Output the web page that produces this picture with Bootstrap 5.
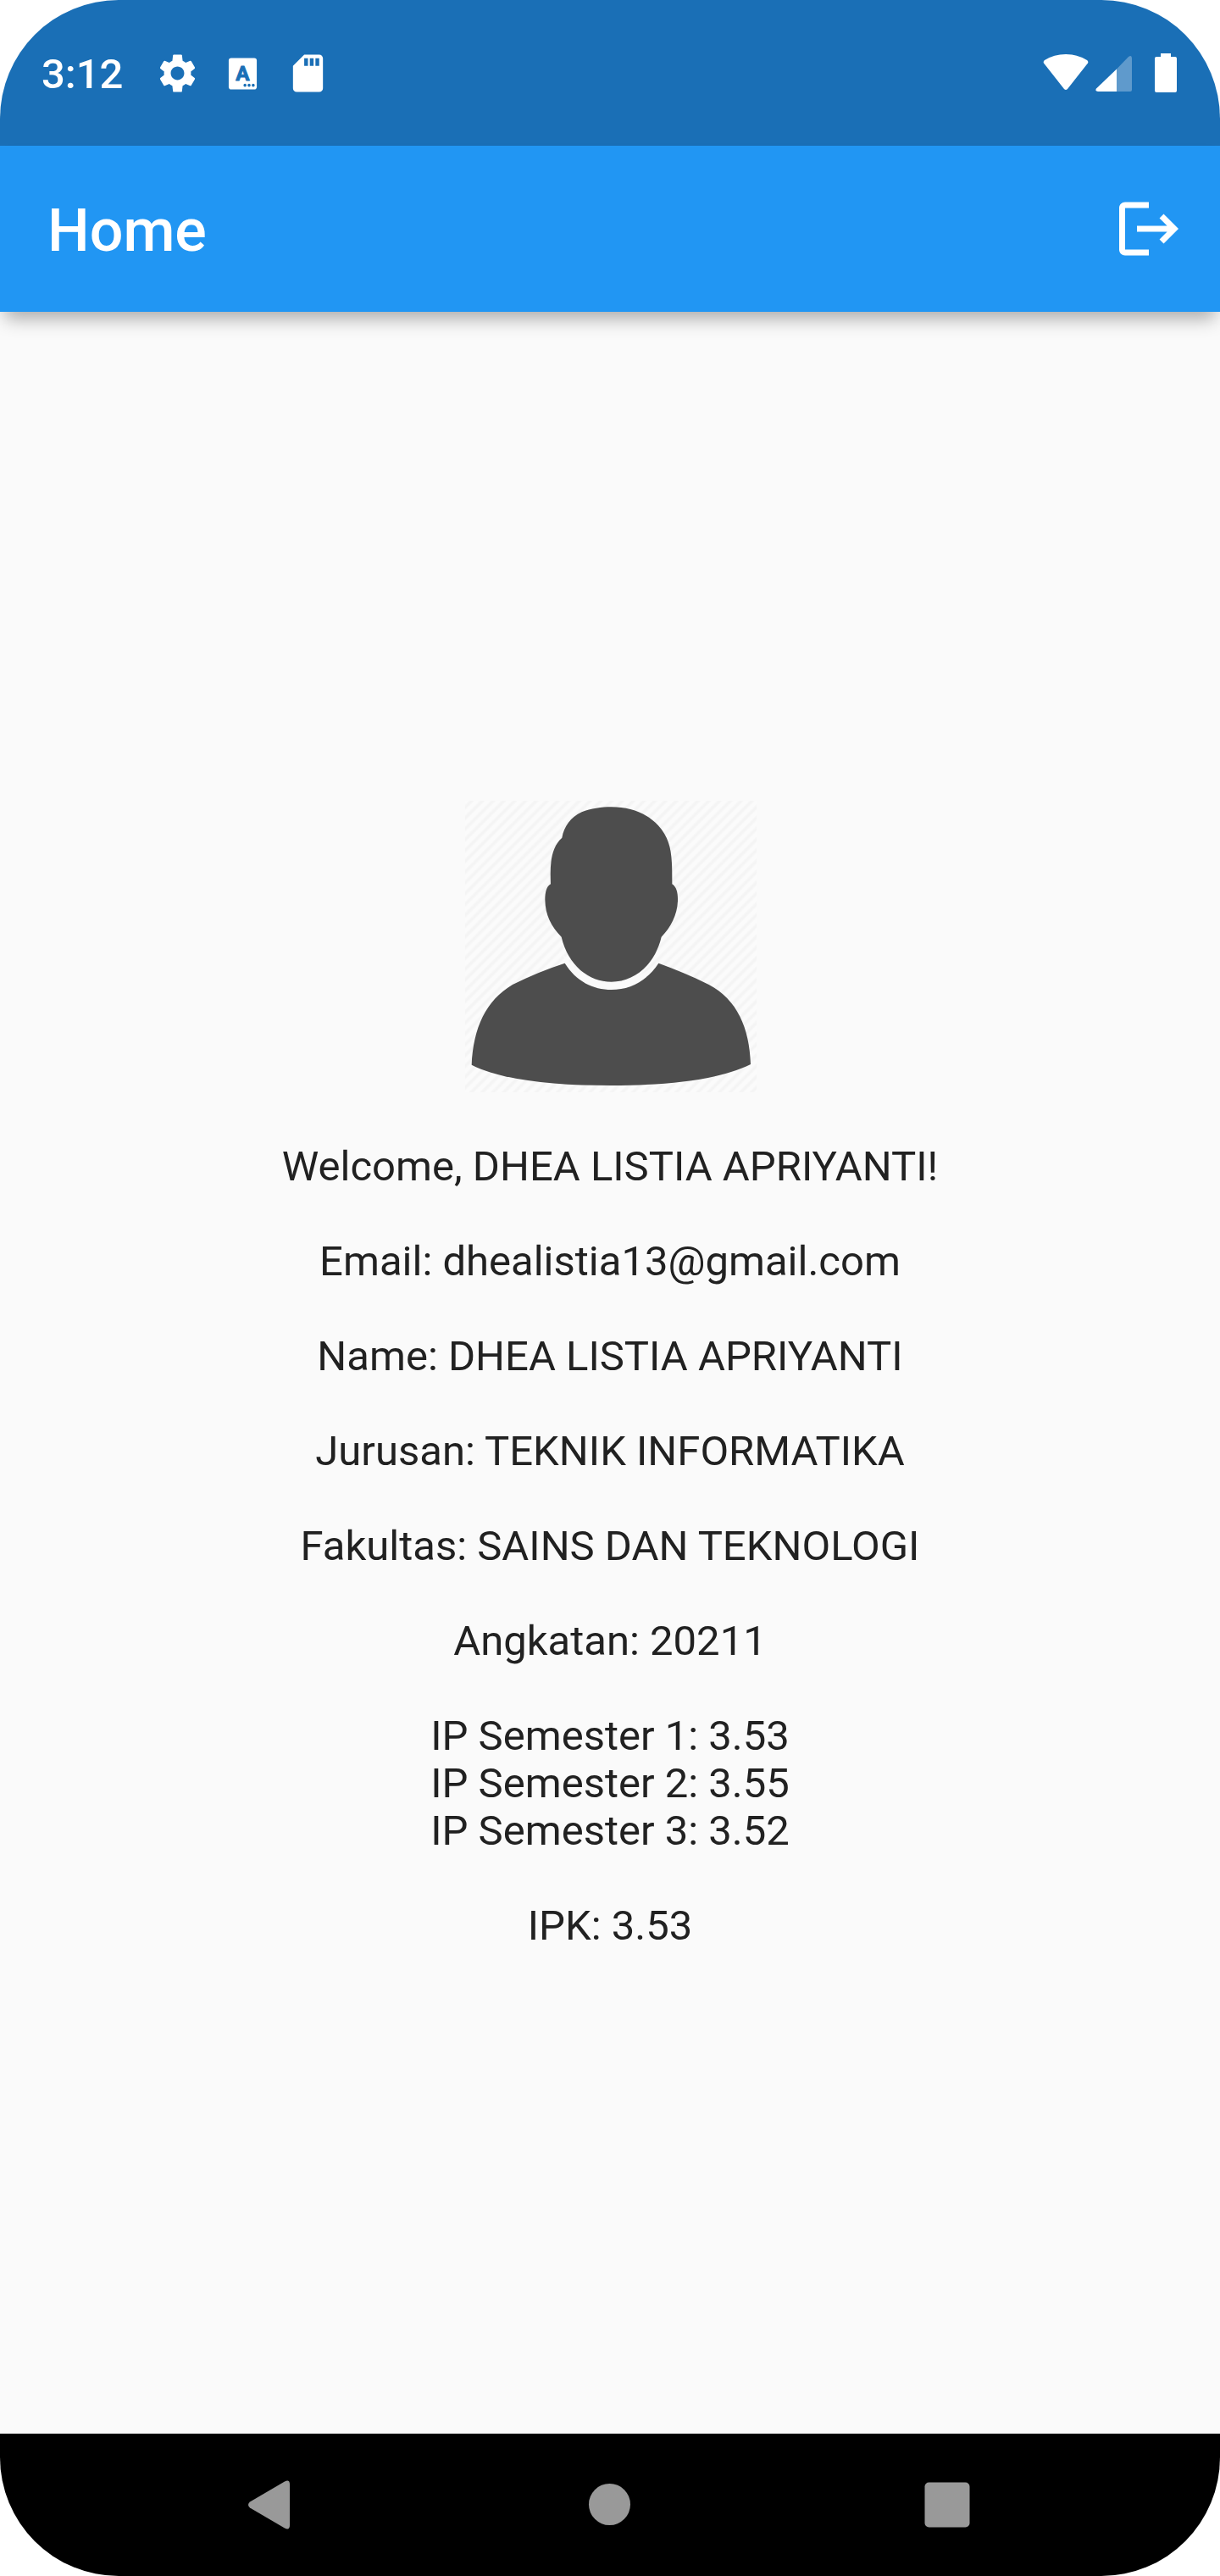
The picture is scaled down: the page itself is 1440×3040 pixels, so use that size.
<!DOCTYPE html>
<html lang="id">
<head>
<meta charset="utf-8">
<meta name="viewport" content="width=device-width, initial-scale=1">
<title>Home</title>
<link rel="stylesheet" href="https://cdn.jsdelivr.net/npm/bootstrap@5.3.0/dist/css/bootstrap.min.css">
<style>
  body { background: #fff; font-family: Roboto, "Liberation Sans", sans-serif; color: #212121; }
  .phone { background: #fafafa; border-radius: 140px; }
  .status-bar { background: #1a6fb6; height: 172px; padding: 0 49px; }
  .clock { font-size: 49px; line-height: 56px; font-weight: 500; margin-right: 14px; padding-top: 4px; }
  .status-bar svg { width: 53px; height: 53px; }
  .status-gap { gap: 24px; }
  .app-bar { background: #2196f3; height: 196px; padding: 0 0 0 56px; box-shadow: 0 14px 20px -6px rgba(0,0,0,.32); z-index: 1; }
  .app-title { font-size: 70px; line-height: 84px; font-weight: 500; padding-top: 4px; }
  .logout { width: 168px; height: 168px; --bs-btn-border-radius: 84px; }
  .logout svg { width: 84px; height: 84px; }
  .content-area { padding-top: 4px; }
  .avatar { width: 350px; height: 350px; margin-bottom: 56px; }
  .profile { font-size: 49px; line-height: 56px; }
  .profile p { margin-bottom: 56px; }
  .nav-keys { background: #000; height: 168px; padding: 0 120px; }
  .nav-keys svg { width: 70px; height: 70px; fill: #999; }
</style>
</head>
<body>
<div class="phone d-flex flex-column min-vh-100 overflow-hidden">
  <header class="status-bar d-flex align-items-center justify-content-between text-white">
    <div class="d-flex align-items-center status-gap">
      <span class="clock">3:12</span>
      <svg viewBox="0 0 24 24" fill="currentColor" aria-hidden="true"><path d="M19.14 12.94c.04-.3.06-.61.06-.94 0-.32-.02-.64-.07-.94l2.03-1.58c.18-.14.23-.41.12-.61l-1.92-3.32c-.12-.22-.37-.29-.59-.22l-2.39.96c-.5-.38-1.03-.7-1.62-.94L14.4 2.31c-.04-.24-.24-.31-.48-.31h-3.84c-.24 0-.43.07-.47.31l-.36 3.04c-.59.24-1.13.57-1.62.94l-2.39-.96c-.22-.08-.47 0-.59.22L2.74 8.87c-.12.21-.08.47.12.61l2.03 1.58c-.05.3-.09.63-.09.94s.02.64.07.94l-2.03 1.58c-.18.14-.23.41-.12.61l1.92 3.32c.12.22.37.29.59.22l2.39-.96c.5.38 1.03.7 1.62.94l.36 3.04c.05.24.24.31.48.31h3.84c.24 0 .44-.07.47-.31l.36-3.04c.59-.24 1.13-.56 1.62-.94l2.39.96c.22.08.47 0 .59-.22l1.92-3.32c.12-.22.07-.47-.12-.61l-2.01-1.58zM12 15.6c-1.98 0-3.6-1.62-3.6-3.6s1.62-3.6 3.6-3.6 3.6 1.62 3.6 3.6-1.62 3.6-3.6 3.6z"/></svg>
      <svg viewBox="0 0 24 24" aria-hidden="true"><rect x="4.500" y="3.800" width="15" height="16.800" rx="1.400" fill="#fff"/><text x="12" y="15.800" text-anchor="middle" font-family="Roboto, sans-serif" font-size="11" font-weight="700" fill="#1a6fb6" stroke="#1a6fb6" stroke-width=".4" stroke-linejoin="round">A</text><g fill="#1a6fb6"><circle cx="13.200" cy="18.400" r=".8"/><circle cx="15.400" cy="18.400" r=".8"/><circle cx="17.600" cy="18.400" r=".8"/></g></svg>
      <svg viewBox="0 0 24 24" fill="currentColor" aria-hidden="true"><path d="M18 2h-8L4 8v12c0 1.100.9 2 2 2h12c1.100 0 2-.9 2-2V4c0-1.100-.9-2-2-2zm-6 6h-2V4h2v4zm3 0h-2V4h2v4zm3 0h-2V4h2v4z"/></svg>
    </div>
    <svg class="w-auto" viewBox="0 0 160 53" fill="currentColor" role="img" aria-label="Wi-Fi, sinyal, baterai">
      <path d="M1 14.500Q0 12.500 2 11Q13 4 27 4T52 11Q54 12.500 53 14.500L29 45Q27 47 25 45Z"/>
      <path d="M87 21.500V48H65Q61 47.500 63 44.500Z"/>
      <path d="M87 21.500L101 7Q105 4.500 105 9V46Q105 48 103 48H87Z" opacity=".3"/>
      <path d="M139 3h12v4h5q2 0 2 2v38q0 2-2 2h-22q-2 0-2-2V9q0-2 2-2h5z"/>
    </svg>
  </header>
  <nav class="app-bar position-relative d-flex align-items-center justify-content-between text-white">
    <h1 class="app-title m-0">Home</h1>
    <button type="button" class="btn logout text-white p-0 border-0 d-flex align-items-center justify-content-center" aria-label="Logout">
      <svg viewBox="0 0 24 24" fill="currentColor" aria-hidden="true"><path d="M17 7l-1.410 1.410L18.170 11H8v2h10.170l-2.580 2.580L17 17l5-5zM4 5h8V3H4c-1.100 0-2 .9-2 2v14c0 1.100.9 2 2 2h8v-2H4V5z"/></svg>
    </button>
  </nav>
  <main class="content-area flex-grow-1 d-flex flex-column align-items-center justify-content-center text-center">
    <svg class="avatar" viewBox="45 39 1050 1050" role="img" aria-label="Foto profil">
      <defs><pattern id="hatch" width="27" height="27" patternUnits="userSpaceOnUse" patternTransform="rotate(45)"><rect width="15" height="27" fill="#f8f8f8"/><rect x="4" width="7" height="27" fill="#f4f4f4"/></pattern></defs>
      <rect x="57" y="45" width="1032" height="1032" fill="#fbfbfb"/>
      <rect x="57" y="45" width="1032" height="1032" fill="url(#hatch)"/>
      <path d="M412 620Q475 714 575 714T740 620L738 610Q690 680 575 690Q470 680 405 590Z" fill="#fafafa"/>
      <g fill="#4d4d4d">
        <path d="M575 67C640 67 700 88 741 133C790 188 790 240 790 340C806 350 811 372 810 400C808 450 785 494 752 527C728 628 655 686 575 686C495 686 422 628 398 527C362 490 341 450 340 395C340 370 345 348 360 340C357 270 360 212 400 176C408 135 430 104 470 85C502 72 540 67 575 67Z"/>
        <path d="M410 620C450 684 510 714 575 714C640 714 700 684 742 620C800 642 860 665 920 696C1020 748 1064 850 1068 978C960 1032 780 1053 575 1053C370 1053 190 1035 80 980C86 850 130 752 225 696C285 665 350 640 410 620Z"/>
      </g>
    </svg>
    <section class="profile">
      <p>Welcome, DHEA LISTIA APRIYANTI!</p>
      <p>Email: dhealistia13@gmail.com</p>
      <p>Name: DHEA LISTIA APRIYANTI</p>
      <p>Jurusan: TEKNIK INFORMATIKA</p>
      <p>Fakultas: SAINS DAN TEKNOLOGI</p>
      <p>Angkatan: 20211</p>
      <p>IP Semester 1: 3.53<br>IP Semester 2: 3.55<br>IP Semester 3: 3.52</p>
      <p class="mb-0">IPK: 3.53</p>
    </section>
  </main>
  <footer class="nav-keys d-flex align-items-center justify-content-around">
    <button type="button" class="btn p-0 border-0 d-flex" aria-label="Kembali"><svg viewBox="0 0 70 70"><path d="M51 7.500Q57 4.500 57 11V59Q57 65.500 51 62.500L10 38.500Q6 35 10 31.500Z"/></svg></button>
    <button type="button" class="btn p-0 border-0 d-flex" aria-label="Beranda"><svg viewBox="0 0 70 70"><circle cx="34.500" cy="34.500" r="24.500"/></svg></button>
    <button type="button" class="btn p-0 border-0 d-flex" aria-label="Aplikasi terbaru"><svg viewBox="0 0 70 70"><rect x="6.500" y="8.500" width="53" height="53" rx="5"/></svg></button>
  </footer>
</div>
<script src="https://cdn.jsdelivr.net/npm/bootstrap@5.3.0/dist/js/bootstrap.bundle.min.js"></script>
</body>
</html>
